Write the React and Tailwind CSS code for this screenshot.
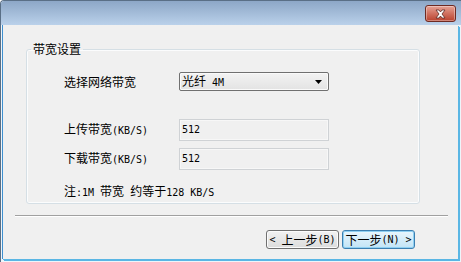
import React from 'react';

// ASCII runs use a narrow mono face (6px per char), CJK runs stay at 12px
function Mixed({ text }) {
  return text
    .split(/([\x20-\x7e]+)/)
    .filter(Boolean)
    .map((s, i) =>
      /^[\x20-\x7e]+$/.test(s) ? (
        <span key={i} className="font-['DejaVu_Sans_Mono'] text-[10px] whitespace-pre">
          {s}
        </span>
      ) : (
        <span key={i}>{s}</span>
      )
    );
}

function CloseButton() {
  return (
    <div className="w-[31px] h-[17px] rounded-[3px] border border-[#6e2a22] bg-linear-to-b from-[#e6a295] via-[#d0705f] to-[#b9412e] shadow-[inset_0_0_0_1px_rgba(255,255,255,0.35)] flex items-center justify-center">
      <svg width="13" height="10" viewBox="0 0 13 10">
        <path
          d="M2 1 L5 1 L6.5 3 L8 1 L11 1 L8 5 L11 9 L8 9 L6.5 7 L5 9 L2 9 L5 5 Z"
          fill="#fff"
          stroke="#5a2a24"
          strokeWidth="0.8"
          strokeLinejoin="round"
        />
      </svg>
    </div>
  );
}

function Field({ value }) {
  return (
    <div className="w-[150px] h-[22px] border border-[#cfd2d5] bg-[#f0f0f0] shadow-[inset_0_0_0_1px_#f7f7f7] px-[2px] flex items-center">
      <Mixed text={value} />
    </div>
  );
}

export default function App() {
  return (
    <div className="w-[461px] h-[262px] bg-[#eef5fa] font-['Noto_Sans_CJK_SC',sans-serif] text-[12px] leading-[14px] text-black flex flex-col border-t border-l border-[#5a6f86] rounded-tl-[4px] overflow-hidden">
      <div className="h-[24px] shrink-0 bg-linear-to-b from-[#8da7c7] to-[#bad1ea] flex justify-end items-start pt-[4px] pr-[5px]">
        <CloseButton />
      </div>

      <div className="flex-1 flex flex-col bg-[#f0f0f0] ml-[1px] mr-[3px] mb-[3px] border-l border-[#3f8fcf] shadow-[1px_1px_0_0_#5ab6e4,2px_2px_0_0_#5ab6e4]">
        <fieldset className="ml-[23px] mt-[17px] w-[394px] h-[162px] border border-[#d5dfe5] rounded-[3px] shadow-[inset_0_0_0_1px_#fbfcfd]">
          <legend className="ml-[4px] px-[2px]">带宽设置</legend>

          <div className="pl-[37px] flex flex-col">
            <div className="flex items-center mt-[16px]">
              <div className="w-[115px]">选择网络带宽</div>
              <div className="w-[150px] h-[19px] rounded-[2px] border border-[#707070] bg-linear-to-b from-[#f3f3f3] to-[#e3e3e3] shadow-[inset_0_0_0_1px_#fafafa] flex items-center justify-between pl-[2px] pr-[6px]">
                <span>
                  <Mixed text="光纤 4M" />
                </span>
                <svg width="7" height="4" viewBox="0 0 7 4">
                  <path d="M0 0 H7 L3.5 4 Z" fill="#000" />
                </svg>
              </div>
            </div>

            <div className="flex items-center mt-[28px]">
              <div className="w-[115px]">
                <Mixed text="上传带宽(KB/S)" />
              </div>
              <Field value="512" />
            </div>

            <div className="flex items-center mt-[7px]">
              <div className="w-[115px]">
                <Mixed text="下载带宽(KB/S)" />
              </div>
              <Field value="512" />
            </div>

            <div className="mt-[14px]">
              <Mixed text="注:1M 带宽 约等于128 KB/S" />
            </div>
          </div>
        </fieldset>

        <div className="ml-[12px] mt-[11px] w-[433px] border-t border-[#a0a0a0] border-b border-b-white" />

        <div className="flex justify-end gap-[3px] mt-[13px] pr-[43px]">
          <button className="w-[73px] h-[19px] rounded-[3px] border border-[#707070] bg-linear-to-b from-[#f2f2f2] to-[#dcdcdc] shadow-[inset_0_0_0_1px_#fbfbfb] flex items-center justify-center leading-[14px]">
            <Mixed text="< 上一步(B)" />
          </button>
          <button className="w-[73px] h-[19px] rounded-[3px] border border-[#3c7fb1] bg-linear-to-b from-[#e9f6fd] to-[#c2e4f6] shadow-[inset_0_0_0_1px_#8fd0f2] flex items-center justify-center leading-[14px]">
            <Mixed text="下一步(N) >" />
          </button>
        </div>
      </div>
    </div>
  );
}
